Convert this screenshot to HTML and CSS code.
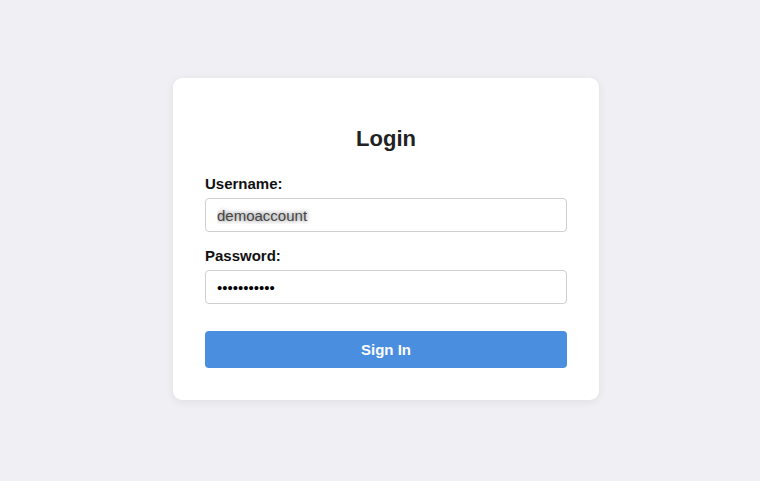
FILE: index.html
```html
<!DOCTYPE html>
<html lang="en">
<head>
<meta charset="utf-8">
<title>Login</title>
<link rel="stylesheet" href="styles.css">
</head>
<body>
<main class="page">
  <form class="card">
    <h1 class="title">Login</h1>
    <label class="label" for="username">Username:</label>
    <input class="field field-user" id="username" type="text" value="demoaccount">
    <label class="label label-pass" for="password">Password:</label>
    <input class="field field-pass" id="password" type="password" value="demoaccount">
    <button class="btn" type="button">Sign In</button>
  </form>
</main>
</body>
</html>
```
FILE: styles.css
```css
* { box-sizing: border-box; }
html, body {
  margin: 0;
  padding: 0;
  height: 100%;
}
body {
  background: #efeff4;
  font-family: "Liberation Sans", Arial, sans-serif;
  color: #222;
}
.page {
  height: 100%;
  display: flex;
  align-items: center;
  justify-content: center;
  padding-left: 12px;
  padding-bottom: 3px;
}
.card {
  width: 426px;
  background: #ffffff;
  border-radius: 9px;
  box-shadow: 0 2px 10px rgba(0, 0, 0, 0.07);
  padding: 32px;
  display: flex;
  flex-direction: column;
}
.title {
  margin: 16px 0 23px;
  font-size: 22px;
  line-height: 26px;
  font-weight: bold;
  text-align: center;
  color: #222;
}
.label {
  font-size: 15px;
  line-height: 18px;
  font-weight: bold;
  color: #111;
  margin-bottom: 5px;
}
.label-pass { margin-top: 15px; }
.field {
  height: 34px;
  border: 1px solid #cfcfcf;
  border-radius: 4px;
  padding: 0 11px;
  font-family: "Liberation Sans", Arial, sans-serif;
  font-size: 15px;
  background: #fff;
  outline: none;
}
.field-user {
  color: #444;
  text-shadow: 0 0 5px rgba(0, 0, 0, 0.6);
}
.field-pass { color: #000; }
.btn {
  margin-top: 27px;
  height: 37px;
  border: none;
  border-radius: 4px;
  background: #4a8fdf;
  color: #ffffff;
  font-family: "Liberation Sans", Arial, sans-serif;
  font-size: 15px;
  font-weight: bold;
}
```
